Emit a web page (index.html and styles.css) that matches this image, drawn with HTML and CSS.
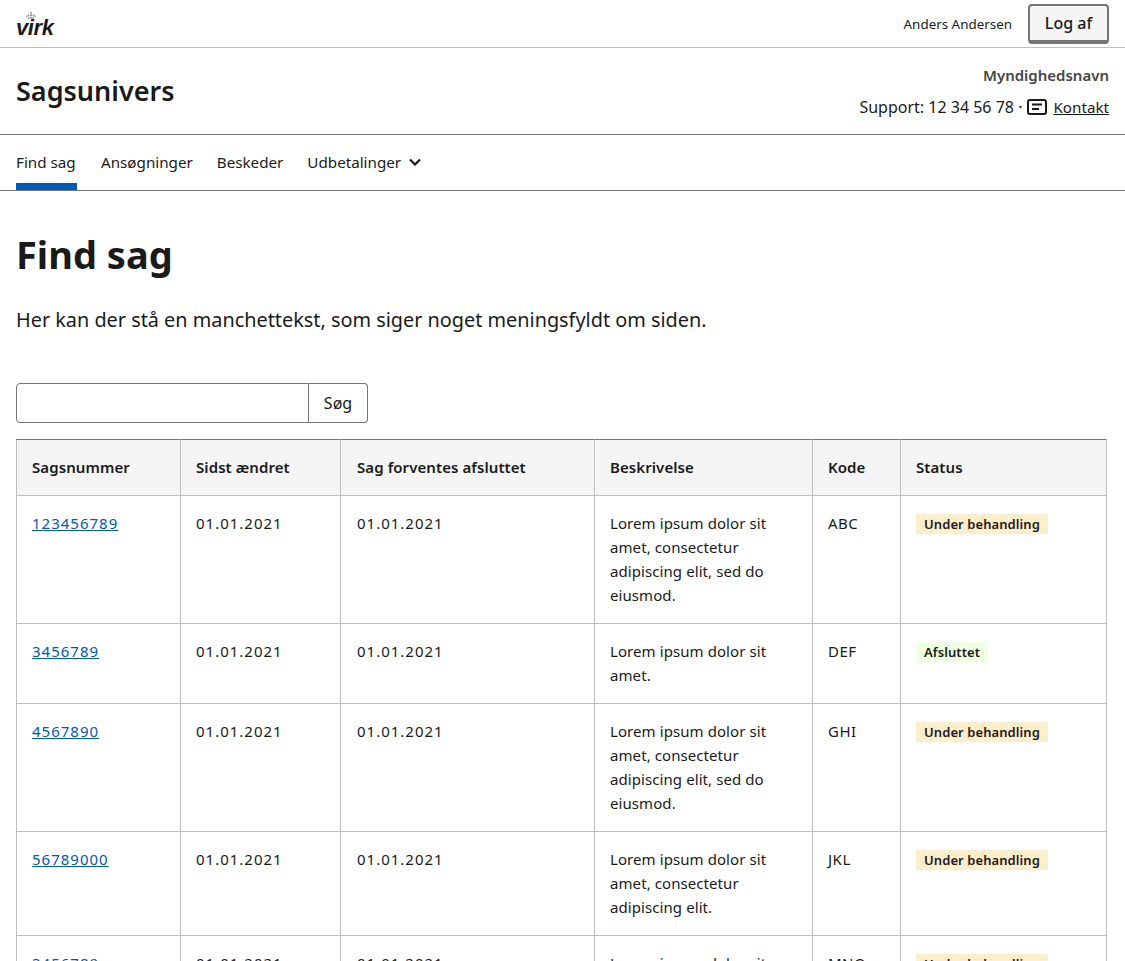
FILE: index.html
```html
<!DOCTYPE html>
<html lang="da">

<head>
  <meta charset="UTF-8">
  <meta name="viewport" content="width=device-width, initial-scale=1.0">
  <link rel="stylesheet" href="styles.css">
  <title>Find sag - Sagsunivers</title>
</head>

<body>
  <div class="portal">
    <div class="logo">
      <svg class="crown" width="10" height="8" viewBox="0 0 10 8">
        <circle cx="5" cy="0.9" r="0.9" />
        <circle cx="5" cy="3.2" r="1" />
        <circle cx="5" cy="5.8" r="1" />
        <circle cx="2.5" cy="3.4" r="0.9" />
        <circle cx="7.5" cy="3.4" r="0.9" />
        <circle cx="0.8" cy="4.2" r="0.8" />
        <circle cx="9.2" cy="4.2" r="0.8" />
        <circle cx="2.7" cy="5.9" r="0.9" />
        <circle cx="7.3" cy="5.9" r="0.9" />
      </svg>
      <span class="logo-text">virk</span>
    </div>
    <div class="portal-user">
      <span class="user-name">Anders Andersen</span>
      <button class="logout">Log af</button>
    </div>
  </div>

  <div class="solution">
    <div class="solution-name">Sagsunivers</div>
    <div class="solution-info">
      <strong class="authority">Myndighedsnavn</strong>
      <div class="support">
        <span>Support: 12 34 56 78 ·</span>
        <svg class="contact-icon" width="20" height="16" viewBox="0 0 20 16">
          <rect x="1" y="1" width="18" height="14" rx="2" />
          <path d="M5 5.5h10M5 10h7" />
        </svg>
        <a href="#" class="contact-link">Kontakt</a>
      </div>
    </div>
  </div>

  <nav class="nav">
    <a href="#" class="nav-item active">Find sag</a>
    <a href="#" class="nav-item">Ansøgninger</a>
    <a href="#" class="nav-item">Beskeder</a>
    <a href="#" class="nav-item">Udbetalinger
      <svg class="chevron" width="12" height="8" viewBox="0 0 12 8">
        <path d="M1 1.5l5 5 5-5" />
      </svg>
    </a>
  </nav>

  <main class="content">
    <h1>Find sag</h1>
    <p class="lead">Her kan der stå en manchettekst, som siger noget meningsfyldt om siden.</p>

    <div class="search">
      <input type="text" class="search-input">
      <button class="search-button">Søg</button>
    </div>

    <table class="cases">
      <thead>
        <tr>
          <th class="col-number">Sagsnummer</th>
          <th class="col-changed">Sidst ændret</th>
          <th class="col-expected">Sag forventes afsluttet</th>
          <th class="col-text">Beskrivelse</th>
          <th class="col-code">Kode</th>
          <th>Status</th>
        </tr>
      </thead>
      <tbody>
        <tr>
          <td class="num"><a href="#">123456789</a></td>
          <td class="num">01.01.2021</td>
          <td class="num">01.01.2021</td>
          <td>Lorem ipsum dolor sit amet, consectetur adipiscing elit, sed do eiusmod.</td>
          <td class="code">ABC</td>
          <td><span class="badge pending">Under behandling</span></td>
        </tr>
        <tr>
          <td class="num"><a href="#">3456789</a></td>
          <td class="num">01.01.2021</td>
          <td class="num">01.01.2021</td>
          <td>Lorem ipsum dolor sit amet.</td>
          <td class="code">DEF</td>
          <td><span class="badge done">Afsluttet</span></td>
        </tr>
        <tr>
          <td class="num"><a href="#">4567890</a></td>
          <td class="num">01.01.2021</td>
          <td class="num">01.01.2021</td>
          <td>Lorem ipsum dolor sit amet, consectetur adipiscing elit, sed do eiusmod.</td>
          <td class="code">GHI</td>
          <td><span class="badge pending">Under behandling</span></td>
        </tr>
        <tr>
          <td class="num"><a href="#">56789000</a></td>
          <td class="num">01.01.2021</td>
          <td class="num">01.01.2021</td>
          <td>Lorem ipsum dolor sit amet, consectetur adipiscing elit.</td>
          <td class="code">JKL</td>
          <td><span class="badge pending">Under behandling</span></td>
        </tr>
        <tr>
          <td class="num"><a href="#">3456789</a></td>
          <td class="num">01.01.2021</td>
          <td class="num">01.01.2021</td>
          <td>Lorem ipsum dolor sit amet, consectetur adipiscing elit.</td>
          <td class="code">MNO</td>
          <td><span class="badge pending">Under behandling</span></td>
        </tr>
      </tbody>
    </table>
  </main>
</body>

</html>
```

FILE: styles.css
```css
html, body {
  height: 961px;
  overflow: hidden;
}

body {
  margin: 0;
  font-family: "Noto Sans", "Open Sans", sans-serif;
  font-size: 16px;
  line-height: 24px;
  color: #1a1a1a;
  background-color: #fff;
}

a {
  color: #1a1a1a;
}

.portal {
  display: flex;
  justify-content: space-between;
  align-items: center;
  height: 47px;
  padding: 0 16px;
  border-bottom: 1px solid #bfbfbf;
}

.logo {
  display: flex;
  flex-direction: column;
  align-items: flex-start;
  width: 39px;
  margin-top: 2px;
}

.crown {
  fill: #8c8c8c;
  margin: 0 0 -2px 10px;
}

.logo-text {
  font-family: "Liberation Sans", sans-serif;
  font-weight: bold;
  font-style: italic;
  font-size: 22px;
  line-height: 20px;
  letter-spacing: -0.4px;
}

.portal-user {
  display: flex;
  align-items: center;
  gap: 16px;
}

.user-name {
  font-size: 13.4px;
}

.logout {
  width: 81px;
  height: 40px;
  margin-top: 1px;
  padding: 0;
  font-family: inherit;
  font-size: 16px;
  font-weight: 500;
  color: #1a1a1a;
  background-color: #f5f5f5;
  border: 2px solid #747474;
  border-bottom-width: 4px;
  border-radius: 4px;
}

.solution {
  display: flex;
  justify-content: space-between;
  align-items: center;
  height: 86px;
  padding: 0 16px;
  border-bottom: 1px solid #747474;
}

.solution-name {
  font-size: 27px;
  font-weight: 600;
}

.solution-info {
  text-align: right;
}

.authority {
  display: block;
  font-size: 15px;
  font-weight: 600;
  color: #454545;
  margin-bottom: 8px;
}

.support {
  display: flex;
  align-items: center;
  gap: 5px;
}

.contact-link {
  margin-left: 1px;
  font-size: 15.2px;
}

.contact-icon {
  fill: none;
  stroke: #1a1a1a;
  stroke-width: 2;
}

.nav {
  display: flex;
  gap: 24px;
  height: 55px;
  padding: 0 16px;
  border-bottom: 1px solid #747474;
}

.nav-item {
  display: flex;
  align-items: center;
  gap: 8px;
  height: 55px;
  box-sizing: border-box;
  padding-bottom: 2px;
  font-size: 15.2px;
  text-decoration: none;
}

.nav-item.active {
  border-bottom: 7px solid #0059b3;
  padding-top: 7px;
  padding-bottom: 2px;
  min-width: 61px;
}

.chevron {
  fill: none;
  stroke: #1a1a1a;
  stroke-width: 2.2;
}

.content {
  padding: 0 18px 0 16px;
}

h1 {
  margin: 39px 0 0;
  font-size: 38px;
  line-height: 48px;
  font-weight: 700;
}

.lead {
  margin: 26px 0 0;
  font-size: 19.85px;
  line-height: 32px;
}

.search {
  display: flex;
  margin-top: 47px;
  width: 352px;
  height: 40px;
}

.search-input {
  flex: 1;
  min-width: 0;
  box-sizing: border-box;
  border: 1px solid #747474;
  border-radius: 4px 0 0 4px;
  background-color: #fff;
}

.search-button {
  width: 59px;
  padding: 0;
  font-family: inherit;
  font-size: 16px;
  color: #1a1a1a;
  background-color: #fff;
  border: 1px solid #747474;
  border-left: none;
  border-radius: 0 4px 4px 0;
}

.cases {
  width: 1091px;
  margin-top: 16px;
  table-layout: fixed;
  border-collapse: collapse;
  border: 1px solid #747474;
  font-size: 15px;
  letter-spacing: 0.08px;
}

.cases th,
.cases td {
  padding: 15px 15px 16px;
  text-align: left;
  vertical-align: top;
  border: 1px solid #bfbfbf;
}

.cases th:nth-child(3),
.cases td:nth-child(3) {
  padding-left: 16px;
}

.cases th {
  font-weight: 600;
  background-color: #f5f5f5;
  border-top-color: #747474;
}

.cases a {
  color: #0059b3;
}

.cases .num {
  letter-spacing: 1px;
}

.cases .code {
  letter-spacing: 0.5px;
}

.col-number { width: 133px; }
.col-changed { width: 129px; }
.col-expected { width: 222px; }
.col-text { width: 187px; }
.col-code { width: 57px; }

.badge {
  display: inline-block;
  margin-top: 3px;
  padding: 0 8px;
  font-size: 13px;
  line-height: 20px;
  font-weight: 600;
  vertical-align: top;
}

.badge.pending {
  background-color: #ffeecc;
}

.badge.done {
  background-color: #eeffe2;
}
```
